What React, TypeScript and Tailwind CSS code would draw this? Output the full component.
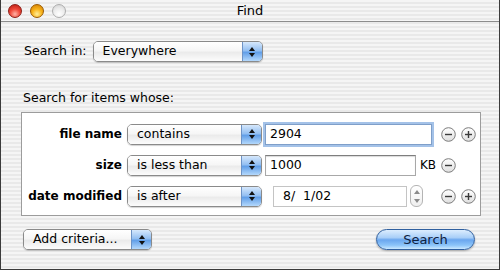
import React from "react";

const stripes =
  "bg-[image:repeating-linear-gradient(180deg,#f5f5f5_0px,#f5f5f5_2px,#e9e9e9_2px,#e9e9e9_4px)]";

function Up({ c = "border-b-[#111]" }: { c?: string }) {
  return <div className={`w-0 h-0 border-x-[3px] border-x-transparent border-b-[4px] ${c}`} />;
}

function Down({ c = "border-t-[#111]" }: { c?: string }) {
  return <div className={`w-0 h-0 border-x-[3px] border-x-transparent border-t-[4px] ${c}`} />;
}

function Popup({ label, w }: { label: string; w: string }) {
  return (
    <div className={`${w} h-[21px] flex rounded-[5px] border border-[#8a8a8a] overflow-hidden shadow-[0_1px_1px_rgba(0,0,0,0.18)]`}>
      <div className="flex-1 flex items-center pl-[9px] bg-[image:linear-gradient(180deg,#ffffff_0%,#f6f6f6_45%,#ebebeb_55%,#fcfcfc_100%)]">
        {label}
      </div>
      <div className="w-[20px] border-l border-[#6d93c6] flex flex-col items-center justify-center gap-[2px] bg-[image:linear-gradient(180deg,#d6e8fc_0%,#93bff2_45%,#629fe8_55%,#b3d8fc_100%)]">
        <Up />
        <Down />
      </div>
    </div>
  );
}

function RoundBtn({ plus }: { plus?: boolean }) {
  return (
    <svg width="15" height="15" viewBox="0 0 15 15">
      <defs>
        <linearGradient id="rb" x1="0" y1="0" x2="0" y2="1">
          <stop offset="0" stopColor="#ffffff" />
          <stop offset="1" stopColor="#dedede" />
        </linearGradient>
      </defs>
      <circle cx="7.5" cy="7.5" r="6.8" fill="url(#rb)" stroke="#7c7c7c" strokeWidth="1" />
      <line x1="4" y1="7.5" x2="11" y2="7.5" stroke="#3a3a3a" strokeWidth="1.4" />
      {plus && <line x1="7.5" y1="4" x2="7.5" y2="11" stroke="#3a3a3a" strokeWidth="1.4" />}
    </svg>
  );
}

function Light({ cls }: { cls: string }) {
  return <div className={`w-[14px] h-[14px] rounded-full border ${cls}`} />;
}

const rows = [
  { label: "file name", op: "contains" },
  { label: "size", op: "is less than" },
  { label: "date modified", op: "is after" },
];

export default function App() {
  return (
    <div
      className={`w-[500px] h-[270px] flex flex-col border-x border-b border-[#3c3c3c] ${stripes} font-['DejaVu_Sans',sans-serif] text-[12.5px] text-black overflow-hidden`}
    >
      {/* title bar */}
      <div className="h-[22px] shrink-0 grid grid-cols-[1fr_auto_1fr] items-center border-b border-[#8c8c8c]">
        <div className="flex items-center gap-[8px] pl-[7px]">
          <Light cls="border-[#8c1d16] bg-[radial-gradient(circle_at_50%_75%,#ffb3a6_0%,#f0493a_45%,#b5160d_100%)]" />
          <Light cls="border-[#9a5a00] bg-[radial-gradient(circle_at_50%_75%,#ffee9a_0%,#f8b41c_45%,#cf7a00_100%)]" />
          <Light cls="border-[#adadad] bg-[radial-gradient(circle_at_50%_75%,#ffffff_0%,#ececec_50%,#cfcfcf_100%)]" />
        </div>
        <div className="text-[13px]">Find</div>
        <div />
      </div>

      {/* body */}
      <div className="flex flex-col px-[20px]">
        <div className="mt-[19px] flex items-center gap-[6px] pl-[3px]">
          <span>Search in:</span>
          <Popup label="Everywhere" w="w-[170px]" />
        </div>

        <div className="mt-[28px] pl-[2px] h-[15px] leading-[15px]">Search for items whose:</div>

        <div className="mt-[7px] w-[460px] bg-white border border-[#9c9c9c] pt-[10px] pb-[8px] flex flex-col gap-[9px]">
          {rows.map((r, i) => (
            <div key={r.label} className="h-[22px] flex items-center">
              <div className="w-[100px] text-right font-bold text-[12px]">{r.label}</div>
              <div className="ml-[5px]">
                <Popup label={r.op} w="w-[135px]" />
              </div>
              <div className="ml-[3px] w-[176px] flex items-center">
                {i === 0 && (
                  <div className="w-[167px] h-[21px] bg-white border border-[#7f9fc9] shadow-[0_0_0_2px_#a4c2e8] flex items-center pl-[4px]">
                    2904
                  </div>
                )}
                {i === 1 && (
                  <>
                    <div className="w-[151px] h-[21px] bg-white border border-[#a8a8a8] border-t-[#7e7e7e] shadow-[inset_0_1px_1px_rgba(0,0,0,0.15)] flex items-center pl-[4px]">
                      1000
                    </div>
                    <span className="ml-[4px] text-[12px]">KB</span>
                  </>
                )}
                {i === 2 && (
                  <>
                    <div className="ml-[8px] w-[134px] h-[21px] bg-white border border-[#c4c4c4] flex items-center pl-[9px] whitespace-pre">
                      {"8/  1/02"}
                    </div>
                    <div className="ml-[3px] w-[13px] h-[22px] rounded-[6px] border border-[#b4b4b4] bg-[image:linear-gradient(180deg,#ffffff,#efefef)] flex flex-col items-center justify-center gap-[5px]">
                      <Up c="border-b-[#8a8a8a]" />
                      <Down c="border-t-[#8a8a8a]" />
                    </div>
                  </>
                )}
              </div>
              <div className="flex items-center gap-[5px]">
                <RoundBtn />
                {i !== 1 && <RoundBtn plus />}
              </div>
            </div>
          ))}
        </div>

        <div className="mt-[13px] flex items-center justify-between pl-[2px] pr-[4px]">
          <Popup label="Add criteria..." w="w-[129px]" />
          <div className="w-[99px] h-[21px] rounded-full border border-[#30609f] flex items-center justify-center text-[13px] text-[#0e2140] shadow-[0_1px_2px_rgba(0,0,0,0.3)] bg-[image:linear-gradient(180deg,#dcedfe_0%,#a9cff8_40%,#6aa6ee_52%,#8cc4f9_80%,#cbe8ff_100%)]">
            Search
          </div>
        </div>
      </div>
    </div>
  );
}
